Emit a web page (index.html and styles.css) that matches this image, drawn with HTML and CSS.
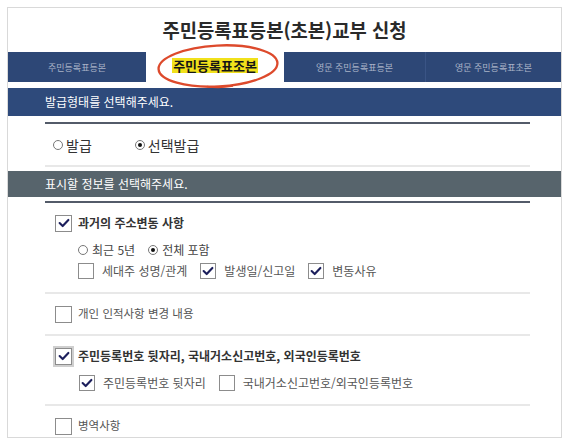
FILE: index.html
```html
<!DOCTYPE html>
<html lang="ko">
<head>
<meta charset="utf-8">
<title>주민등록표등본(초본)교부 신청</title>
<link rel="stylesheet" href="styles.css">
</head>
<body>
<div class="frame">
  <h1 class="title">주민등록표등본(초본)교부 신청</h1>
  <div class="tabs">
    <div class="tab tab-a">주민등록표등본</div>
    <div class="tab tab-b active">
      <span class="hl">주민등록표조본</span>
      <svg class="mark" width="127" height="49" viewBox="0 0 127 49" aria-hidden="true">
        <ellipse cx="63" cy="24" rx="59.5" ry="20.5" transform="rotate(-3 63 24)" fill="none" stroke="#dd4a2c" stroke-width="2.3"/>
        <path d="M52 44.5 C 60 46, 70 45.5, 78 44" fill="none" stroke="#dd4a2c" stroke-width="1.6"/>
      </svg>
    </div>
    <div class="tab tab-c">영문 주민등록표등본</div>
    <div class="tab tab-d">영문 주민등록표초본</div>
  </div>

  <div class="band band-navy">발급형태를 선택해주세요.</div>
  <div class="section">
    <div class="rule-dark"></div>
    <div class="issue-row">
      <label class="radio radio-lg"><span class="rb"></span>발급</label>
      <label class="radio radio-lg"><span class="rb on"></span>선택발급</label>
    </div>
    <div class="rule-light"></div>
  </div>

  <div class="band band-slate">표시할 정보를 선택해주세요.</div>
  <div class="section">
    <div class="rule-dark rule-dark-2"></div>

    <div class="group group-top">
      <div class="row-main">
        <span class="cb cb-main on"><svg viewBox="0 0 16 16"><polyline points="3,8 6.5,11.5 13,4.5"/></svg></span>
        <span class="label-bold">과거의 주소변동 사항</span>
      </div>
      <div class="row-sub row-radio">
        <label class="radio"><span class="rb"></span>최근 5년</label>
        <label class="radio"><span class="rb on"></span>전체 포함</label>
      </div>
      <div class="row-sub row-checks">
        <label class="check"><span class="cb"></span>세대주 성명/관계</label>
        <label class="check"><span class="cb on"><svg viewBox="0 0 16 16"><polyline points="3,8 6.5,11.5 13,4.5"/></svg></span>발생일/신고일</label>
        <label class="check"><span class="cb on"><svg viewBox="0 0 16 16"><polyline points="3,8 6.5,11.5 13,4.5"/></svg></span>변동사유</label>
      </div>
    </div>
    <div class="rule-light"></div>

    <div class="group group-single">
      <div class="row-main">
        <span class="cb cb-main"></span>
        <span class="label-plain">개인 인적사항 변경 내용</span>
      </div>
    </div>
    <div class="rule-light"></div>

    <div class="group group-top">
      <div class="row-main">
        <span class="cb cb-main cb-focus on"><svg viewBox="0 0 16 16"><polyline points="3,8 6.5,11.5 13,4.5"/></svg></span>
        <span class="label-bold">주민등록번호 뒷자리, 국내거소신고번호, 외국인등록번호</span>
      </div>
      <div class="row-sub row-checks row-checks-2">
        <label class="check"><span class="cb on"><svg viewBox="0 0 16 16"><polyline points="3,8 6.5,11.5 13,4.5"/></svg></span>주민등록번호 뒷자리</label>
        <label class="check"><span class="cb"></span>국내거소신고번호/외국인등록번호</label>
      </div>
    </div>
    <div class="rule-light"></div>

    <div class="group group-single">
      <div class="row-main">
        <span class="cb cb-main"></span>
        <span class="label-plain">병역사항</span>
      </div>
    </div>
  </div>
</div>
</body>
</html>
```

FILE: styles.css
```css
* { box-sizing: border-box; }

html, body {
  margin: 0;
  padding: 0;
  background: #ffffff;
}

body {
  font-family: "Noto Sans CJK KR", "Noto Sans", "Liberation Sans", sans-serif;
  color: #333;
}

.frame {
  margin: 7px 0 0 7px;
  width: 555px;
  height: 431px;
  border: 1px solid #d9d9d9;
  overflow: hidden;
  background: #fff;
}

.title {
  margin: 0;
  height: 44px;
  display: flex;
  align-items: center;
  justify-content: center;
  font-size: 18.8px;
  font-weight: 700;
  color: #2a2a2a;
  line-height: 1;
}

/* tabs */
.tabs {
  display: flex;
  height: 30px;
}

.tab {
  display: flex;
  align-items: center;
  justify-content: center;
  background: #2d4776;
  color: #aab4c8;
  font-size: 9px;
  line-height: 1;
}

.tab-a { width: 138px; }
.tab-b { width: 138px; }
.tab-c { width: 142px; border-right: 1px solid #3a5485; }
.tab-d { width: 135px; }

.tab.active {
  position: relative;
  background: #fff;
}

.hl {
  background: #f1e11b;
  color: #151515;
  font-size: 13px;
  font-weight: 700;
  line-height: 13px;
  padding: 1px 1px;
  margin-top: -3px;
}

.mark {
  position: absolute;
  left: 9px;
  top: -10px;
}

/* section bands */
.band {
  color: #fff;
  font-size: 12px;
  padding-left: 37px;
}

.band-navy {
  margin-top: 6px;
  height: 28px;
  line-height: 28px;
  background: #2e4a7b;
}

.band-slate {
  margin-top: 4px;
  height: 26px;
  line-height: 26px;
  background: #57646c;
}

.section {
  margin: 0 31px 0 37px;
}

.rule-dark {
  margin-top: 6px;
  height: 2px;
  background: #535b69;
}

.rule-dark-2 { margin-top: 4px; }

.rule-light {
  height: 2px;
  background: #e8e8e8;
}

/* radios */
.issue-row {
  height: 41px;
  display: flex;
  align-items: center;
  padding-left: 8px;
  gap: 43px;
}

.radio {
  display: flex;
  align-items: center;
  gap: 4px;
  font-size: 12px;
  color: #444;
  line-height: 1;
}

.radio-lg {
  font-size: 14px;
  gap: 3px;
  color: #333;
}

.rb {
  width: 10px;
  height: 10px;
  border: 1px solid #777;
  border-radius: 50%;
  background: #fff;
  display: flex;
  align-items: center;
  justify-content: center;
}

.radio-lg .rb {
  width: 10px;
  height: 10px;
}

.rb.on::after {
  content: "";
  width: 4px;
  height: 4px;
  border-radius: 50%;
  background: #111;
}

/* checkbox groups */
.group-top { padding: 8px 0 12px 10px; }
.group-single { padding: 8px 0 8px 10px; }

.row-main {
  height: 24px;
  display: flex;
  align-items: center;
  gap: 6px;
}

.row-sub { padding-left: 23px; }

.row-radio {
  margin-top: 5px;
  height: 20px;
  display: flex;
  align-items: center;
  gap: 13px;
}

.row-checks {
  margin-top: 2px;
  height: 18px;
  display: flex;
  align-items: center;
  gap: 13px;
}

.row-checks-2 {
  margin-top: 6px;
  padding-left: 24px;
  gap: 13px;
}

.check {
  display: flex;
  align-items: center;
  gap: 8px;
  font-size: 12px;
  color: #555;
  line-height: 1;
}

.cb {
  width: 16px;
  height: 16px;
  border: 1px solid #8c8c8c;
  background: #fff;
  display: flex;
  align-items: center;
  justify-content: center;
  flex: none;
}

.cb-main {
  width: 17px;
  height: 17px;
}

.cb-focus {
  outline: 2px solid #cfcfcf;
}

.cb svg {
  width: 14px;
  height: 14px;
}

.cb polyline {
  fill: none;
  stroke: #1c1f5c;
  stroke-width: 2.4;
  stroke-linecap: round;
  stroke-linejoin: round;
}

.label-bold {
  font-size: 12px;
  font-weight: 700;
  color: #333;
  line-height: 1;
}

.label-plain {
  font-size: 11.5px;
  color: #555;
  line-height: 1;
}
```
